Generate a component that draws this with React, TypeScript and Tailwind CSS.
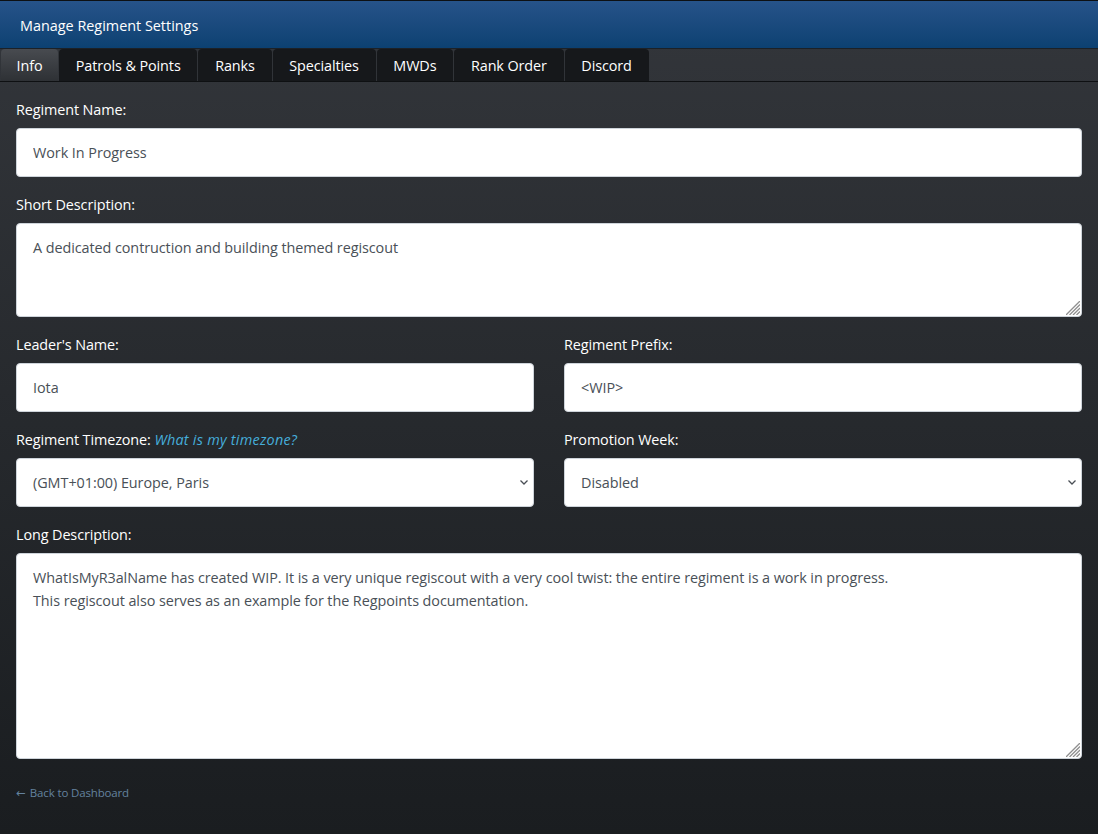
import React from 'react';

const tabs = ['Info', 'Patrols & Points', 'Ranks', 'Specialties', 'MWDs', 'Rank Order', 'Discord'];

const inputClass =
  'block w-full h-[49px] px-4 bg-white rounded-[4px] border border-[#ced4da] text-[#495057] text-[14.4px] tracking-[-0.05px] outline-none';
const textareaClass =
  'block w-full px-4 pt-3 pb-2 bg-white rounded-[4px] border border-[#ced4da] text-[#495057] text-[14.4px] tracking-[-0.07px] leading-[23px] outline-none resize-none';

function Label({ children }: { children: React.ReactNode }) {
  return <label className="block h-[22px] pt-px mb-2 text-[14.4px] leading-[22px] text-white">{children}</label>;
}

function ResizeGrip() {
  return (
    <svg
      className="absolute right-[2px] bottom-[2px] pointer-events-none"
      width="14"
      height="14"
      viewBox="0 0 14 14"
      stroke="#8f8f8f"
      strokeWidth="1.3"
    >
      <path d="M0 14L14 0M3.5 14L14 3.5M7 14L14 7M10.5 14L14 10.5" />
    </svg>
  );
}

function Select({ value }: { value: string }) {
  return (
    <div className="relative">
      <select className={`${inputClass} appearance-none`} defaultValue={value}>
        <option value={value}>{value}</option>
      </select>
      <svg
        className="absolute right-[6px] top-[22px] pointer-events-none"
        width="8"
        height="5"
        viewBox="0 0 8 5"
        fill="none"
        stroke="#4a4f55"
        strokeWidth="1.3"
      >
        <path d="M0.5 0.5L4 4L7.5 0.5" />
      </svg>
    </div>
  );
}

export default function App() {
  return (
    <div className="min-h-[834px] flex flex-col bg-gradient-to-b from-[#33363b] to-[#1a1d20] font-['Open_Sans',sans-serif] tracking-[-0.1px]">
      <div className="h-[49px] flex items-center pl-5 pt-[3px] border-y border-t-[#0d1013] border-b-[#1c2127] bg-gradient-to-b from-[#265389] to-[#0c4172] text-white text-[14.4px] tracking-normal">
        Manage Regiment Settings
      </div>

      <div className="h-[33px] flex gap-px pl-px border-b border-[#0e1012]">
        {tabs.map((tab, i) => (
          <div
            key={tab}
            className={
              i === 0
                ? 'h-[32px] px-[15.5px] pt-px flex items-center rounded-t-[4px] bg-gradient-to-b from-[#484b50] to-[#2e3135] text-white text-[14.4px]'
                : 'h-[32px] px-[16.75px] pt-px flex items-center rounded-t-[4px] bg-[#16181b] text-white text-[14.4px]'
            }
          >
            {tab}
          </div>
        ))}
      </div>

      <div className="px-4 pt-4">
        <Label>Regiment Name:</Label>
        <input className={inputClass} defaultValue="Work In Progress" />

        <div className="mt-4">
          <Label>Short Description:</Label>
          <div className="relative">
            <textarea
              className={`${textareaClass} h-[94px]`}
              defaultValue="A dedicated contruction and building themed regiscout"
            />
            <ResizeGrip />
          </div>
        </div>

        <div className="mt-4 grid grid-cols-2 gap-x-[30px] gap-y-4">
          <div>
            <Label>Leader's Name:</Label>
            <input className={inputClass} defaultValue="Iota" />
          </div>
          <div>
            <Label>Regiment Prefix:</Label>
            <input className={inputClass} defaultValue="<WIP>" />
          </div>
          <div>
            <Label>
              Regiment Timezone: <a className="italic tracking-[0.25px] text-[#45aedb]">What is my timezone?</a>
            </Label>
            <Select value="(GMT+01:00) Europe, Paris" />
          </div>
          <div>
            <Label>Promotion Week:</Label>
            <Select value="Disabled" />
          </div>
        </div>

        <div className="mt-4">
          <Label>Long Description:</Label>
          <div className="relative">
            <textarea
              className={`${textareaClass} h-[206px]`}
              defaultValue={
                'WhatIsMyR3alName has created WIP. It is a very unique regiscout with a very cool twist: the entire regiment is a work in progress.\nThis regiscout also serves as an example for the Regpoints documentation.'
              }
            />
            <ResizeGrip />
          </div>
        </div>

        <a className="block mt-[26px] text-[11.5px] tracking-[-0.15px] leading-4 text-[#64829e]">
          <span className="font-['DejaVu_Sans',sans-serif] mr-[1.5px]">←</span> Back to Dashboard
        </a>
      </div>
    </div>
  );
}
